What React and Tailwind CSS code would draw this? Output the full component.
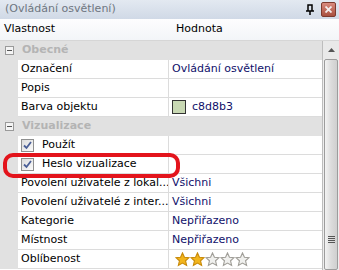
import React from 'react';

const font = { fontFamily: '"DejaVu Sans", "Liberation Sans", sans-serif' };

function MinusBox() {
  return (
    <div className="w-[9px] h-[9px] border border-[#9a9a9a] bg-[#f4f4f4] flex items-center justify-center">
      <div className="w-[5px] h-px bg-[#555]" />
    </div>
  );
}

function Check() {
  return (
    <div className="w-[13px] h-[13px] border border-[#8e8f8f] bg-gradient-to-br from-[#dcdcdc] to-[#fbfbfb] flex items-center justify-center">
      <svg width="9" height="9" viewBox="0 0 9 9">
        <path d="M1 4.5 L3.5 7 L8 1" fill="none" stroke="#4a5f97" strokeWidth="1.8" />
      </svg>
    </div>
  );
}

function Star({ on }) {
  return (
    <svg width="15" height="15" viewBox="0 0 24 24">
      <path
        d="M12 1.5l3.1 6.9 7.4.7-5.6 5 1.7 7.4L12 17.7 5.4 21.5l1.7-7.4-5.6-5 7.4-.7z"
        fill={on ? '#f2b51d' : '#f0f0ee'}
        stroke={on ? '#c88a0a' : '#a09e98'}
        strokeWidth="1.8"
      />
    </svg>
  );
}

function Category({ label }) {
  return (
    <div className="h-[19px] flex items-center bg-[#e1e1e1]">
      <div className="w-[18px] flex justify-center pl-[1px]">
        <MinusBox />
      </div>
      <span className="ml-[4px] font-bold text-[#b4b4b4]">{label}</span>
    </div>
  );
}

function Row({ name, value, check }) {
  return (
    <div className="h-[19px] flex">
      <div className="w-[18px] bg-[#e1e1e1]" />
      <div className="w-[151px] flex items-center border-b border-r border-[#dcdcdc] bg-white pl-[3px] overflow-hidden whitespace-nowrap">
        {check && (
          <div className="mr-[8px]">
            <Check />
          </div>
        )}
        <span className="text-black">{name}</span>
      </div>
      <div className="flex-1 flex items-center border-b border-[#dcdcdc] bg-white pl-[3px] text-[#10106a] whitespace-nowrap">
        {value}
      </div>
    </div>
  );
}

export default function App() {
  return (
    <div className="w-[339px] h-[270px] overflow-hidden bg-white text-[11px] relative" style={font}>
      <div className="h-[19px] flex items-center bg-gradient-to-b from-[#e3e9f1] to-[#d0d9e6] pl-[5px] pr-[3px]">
        <span className="text-[#6e7680] flex-1">(Ovládání osvětlení)</span>
        <svg width="10" height="12" viewBox="0 0 10 12" className="mr-[6px]">
          <path d="M3 1h4v6H3z M1 7h8 M5 7v4" fill="none" stroke="#000" strokeWidth="1.5" />
        </svg>
        <div className="w-[15px] h-[15px] rounded-[2px] border border-[#7d3a2e] bg-gradient-to-b from-[#d98a7e] to-[#a9503f] flex items-center justify-center">
          <svg width="7" height="7" viewBox="0 0 7 7">
            <path d="M0.5 0.5L6.5 6.5M6.5 0.5L0.5 6.5" stroke="#f4eeee" strokeWidth="1.8" />
          </svg>
        </div>
      </div>
      <div className="h-[22px] flex items-center bg-gradient-to-b from-[#fdfdfe] to-[#f3f5f8] border-b border-[#d6d6d6]">
        <span className="w-[172px] pl-[4px] text-black">Vlastnost</span>
        <span className="text-black pl-[4px]">Hodnota</span>
      </div>
      <div className="flex">
        <div className="w-[322px]">
          <Category label="Obecné" />
          <Row name="Označení" value="Ovládání osvětlení" />
          <Row name="Popis" value="" />
          <Row
            name="Barva objektu"
            value={
              <>
                <div className="w-[14px] h-[14px] bg-[#c8d8b3] border border-[#333] mr-[6px]" />
                <span>c8d8b3</span>
              </>
            }
          />
          <Category label="Vizualizace" />
          <Row name="Použít" value="" check />
          <Row name="Heslo vizualizace" value="" check />
          <Row name="Povolení uživatele z lokal..." value="Všichni" />
          <Row name="Povolení uživatelé z inter..." value="Všichni" />
          <Row name="Kategorie" value="Nepřiřazeno" />
          <Row name="Místnost" value="Nepřiřazeno" />
          <Row
            name="Oblíbenost"
            value={
              <div className="flex pl-[3px]">
                <Star on />
                <Star on />
                <Star />
                <Star />
                <Star />
              </div>
            }
          />
        </div>
        <div className="w-[17px] h-[229px] border-l border-[#bdbdbd] bg-[#eeeeee] flex flex-col">
          <div className="h-[18px] flex items-center justify-center bg-[#e9e9e9]">
            <svg width="7" height="4" viewBox="0 0 7 4">
              <path d="M0 4L3.5 0L7 4z" fill="#555" />
            </svg>
          </div>
          <div className="flex-1 mx-[1px] border border-[#9c9c9c] rounded-[2px] bg-gradient-to-r from-[#f3f3f3] via-[#dcdcdc] to-[#cfcfcf] flex flex-col items-center justify-end pb-[26px]">
            <div className="flex flex-col gap-[1px]">
              <div className="w-[7px] h-[1px] bg-[#555]" />
              <div className="w-[7px] h-[1px] bg-[#555]" />
              <div className="w-[7px] h-[1px] bg-[#555]" />
              <div className="w-[7px] h-[1px] bg-[#555]" />
            </div>
          </div>
        </div>
      </div>
      <div className="absolute left-[3px] top-[153px] w-[177px] h-[25px] border-[4px] border-[#e3141c] rounded-[10px]" />
    </div>
  );
}
